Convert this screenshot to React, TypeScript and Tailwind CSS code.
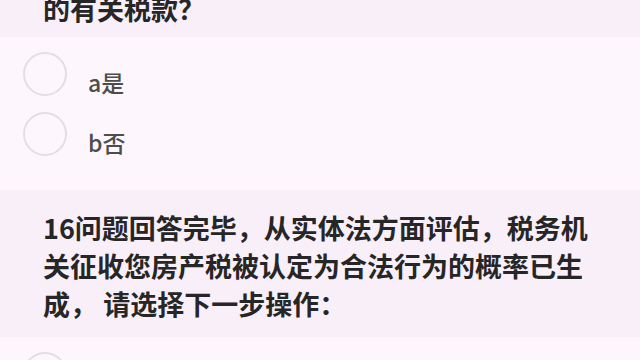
const font = {
  fontFamily: '"Noto Sans CJK SC", "Noto Sans", sans-serif',
};

function Option({ label }: { label: string }) {
  return (
    <div className="flex h-[60px] items-center pl-[23px]">
      <div className="h-[44px] w-[44px] shrink-0 rounded-full border-2 border-[#e2dee3]" />
      <span className="ml-[21px] mt-[17px] text-[23px] font-medium leading-none text-[#4d4d4d]">
        {label}
      </span>
    </div>
  );
}

export default function App() {
  return (
    <div
      className="flex h-[360px] w-[640px] flex-col overflow-hidden bg-[#fdf7fd]"
      style={font}
    >
      <div className="h-[37px] shrink-0 overflow-hidden bg-[#f8eff9] pl-[43px]">
        <p className="-mt-[10px] text-[27px] font-bold leading-[38px] text-[#262626]">
          的有关税款？
        </p>
      </div>

      <div className="shrink-0 pb-[26px] pt-[7px]">
        <Option label="a是" />
        <Option label="b否" />
      </div>

      <div className="shrink-0 bg-[#f8eff9] pb-[14px] pl-[43px] pt-[19px]">
        <p className="w-[556px] text-[27px] font-bold leading-[38px] text-[#262626]">
          16问题回答完毕，从实体法方面评估，税务机关征收您房产税被认定为合法行为的概率已生成，
          请选择下一步操作：
        </p>
      </div>

      <div className="pt-[7px]">
        <Option label="a继续" />
      </div>
    </div>
  );
}
